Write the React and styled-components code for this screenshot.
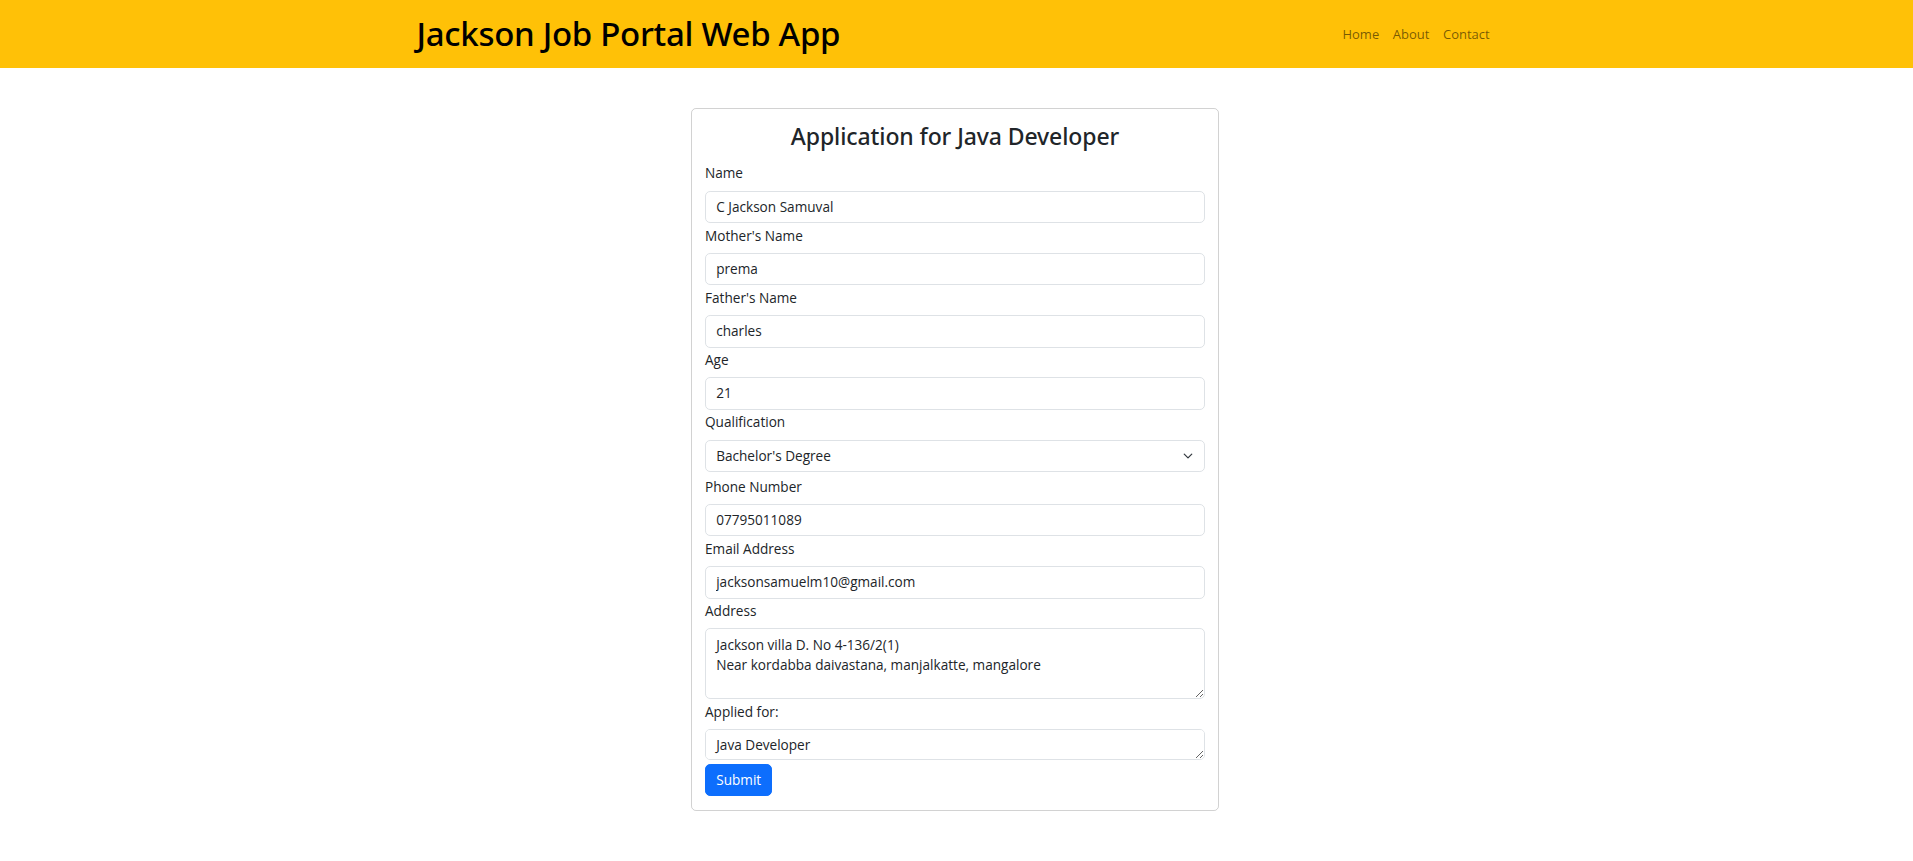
import styled, { createGlobalStyle } from "styled-components";

const GlobalStyle = createGlobalStyle`
  * { box-sizing: border-box; }
  body {
    margin: 0;
    background: #fff;
    color: #212529;
    font-family: "Open Sans", "Noto Sans", sans-serif;
    font-size: 13.6px;
    line-height: 1.5;
  }
`;

const fields = [
  { label: "Name", value: "C Jackson Samuval" },
  { label: "Mother's Name", value: "prema" },
  { label: "Father's Name", value: "charles" },
  { label: "Age", value: "21" },
];

const contactFields = [
  { label: "Phone Number", value: "07795011089" },
  { label: "Email Address", value: "jacksonsamuelm10@gmail.com" },
];

export default function App() {
  return (
    <>
      <GlobalStyle />
      <Navbar>
        <NavContainer>
          <Brand>Jackson Job Portal Web App</Brand>
          <NavLinks>
            <NavLink href="#">Home</NavLink>
            <NavLink href="#">About</NavLink>
            <NavLink href="#">Contact</NavLink>
          </NavLinks>
        </NavContainer>
      </Navbar>

      <Main>
        <Card>
          <CardTitle>Application for Java Developer</CardTitle>
          <Form onSubmit={(e) => e.preventDefault()}>
            {fields.map((f) => (
              <Field key={f.label}>
                <Label>{f.label}</Label>
                <Input type="text" defaultValue={f.value} />
              </Field>
            ))}
            <Field $extra>
              <Label>Qualification</Label>
              <SelectWrap>
                <Select defaultValue="bachelor">
                  <option value="hs">High School</option>
                  <option value="bachelor">Bachelor's Degree</option>
                  <option value="master">Master's Degree</option>
                </Select>
                <Chevron viewBox="0 0 16 16">
                  <path
                    d="m2 5 6 6 6-6"
                    fill="none"
                    stroke="#343a40"
                    strokeWidth="2"
                    strokeLinecap="round"
                    strokeLinejoin="round"
                  />
                </Chevron>
              </SelectWrap>
            </Field>
            {contactFields.map((f) => (
              <Field key={f.label}>
                <Label>{f.label}</Label>
                <Input type="text" defaultValue={f.value} />
              </Field>
            ))}
            <Field>
              <Label>Address</Label>
              <TextArea
                $height={71}
                defaultValue={
                  "Jackson villa D. No 4-136/2(1)\nNear kordabba daivastana, manjalkatte, mangalore"
                }
              />
            </Field>
            <Field>
              <Label>Applied for:</Label>
              <TextArea $height={31} defaultValue="Java Developer" />
            </Field>
            <SubmitButton type="submit">Submit</SubmitButton>
          </Form>
        </Card>
      </Main>
    </>
  );
}

/* ============ Styles ============ */
const Navbar = styled.nav`
  background: #ffc107;
  height: 68px;
  display: flex;
  align-items: center;
`;
const NavContainer = styled.div`
  width: 1080px;
  margin: 0 auto;
  display: flex;
  align-items: center;
  justify-content: space-between;
`;
const Brand = styled.h1`
  margin: 0;
  font-family: "Noto Sans", "Open Sans", sans-serif;
  font-size: 33px;
  font-weight: 500;
  letter-spacing: -0.3px;
  line-height: 1.2;
  color: #000;
`;
const NavLinks = styled.div`
  display: flex;
  align-items: center;
  padding-top: 1px;
`;
const NavLink = styled.a`
  padding: 6.8px;
  font-size: 13px;
  color: rgba(0, 0, 0, 0.55);
  text-decoration: none;
`;
const Main = styled.main`
  display: flex;
  justify-content: center;
  padding: 40px 3px 40px 0;
`;
const Card = styled.div`
  width: 528px;
  border: 1px solid rgba(0, 0, 0, 0.175);
  border-radius: 5px;
  padding: 13.6px 13px 13.6px;
`;
const CardTitle = styled.h3`
  margin: 0 0 13.2px;
  text-align: center;
  font-family: "Noto Sans", "Open Sans", sans-serif;
  font-size: 23px;
  font-weight: 500;
  letter-spacing: -0.1px;
  line-height: 1.2;
`;
const Form = styled.form`
  display: flex;
  flex-direction: column;
  gap: 2.5px;
`;
const Field = styled.div`
  display: flex;
  flex-direction: column;
  margin-bottom: ${(p) => (p.$extra ? "2px" : "0")};
`;
const Label = styled.label`
  margin-bottom: 6.8px;
`;
const controlBase = `
  width: 100%;
  font-family: inherit;
  font-size: 13.6px;
  line-height: 20.4px;
  color: #212529;
  background: #fff;
  border: 1px solid #dee2e6;
  border-radius: 5.1px;
  padding: 5.1px 10.2px;
  outline: none;
`;
const Input = styled.input`
  ${controlBase}
  display: block;
`;
const SelectWrap = styled.div`
  position: relative;
`;
const Select = styled.select`
  ${controlBase}
  display: block;
  appearance: none;
  padding-right: 32px;
`;
const Chevron = styled.svg`
  position: absolute;
  right: 12px;
  top: 50%;
  width: 10px;
  height: 10px;
  transform: translateY(-50%);
  pointer-events: none;
`;
const TextArea = styled.textarea`
  ${controlBase}
  display: block;
  height: ${(p) => p.$height}px;
  resize: vertical;
`;
const SubmitButton = styled.button`
  align-self: flex-start;
  margin-top: 1.2px;
  font-family: inherit;
  font-size: 13.6px;
  line-height: 20.4px;
  padding: 5.1px 10.2px;
  color: #fff;
  background: #0d6efd;
  border: 1px solid #0d6efd;
  border-radius: 5.1px;
  cursor: pointer;
`;
